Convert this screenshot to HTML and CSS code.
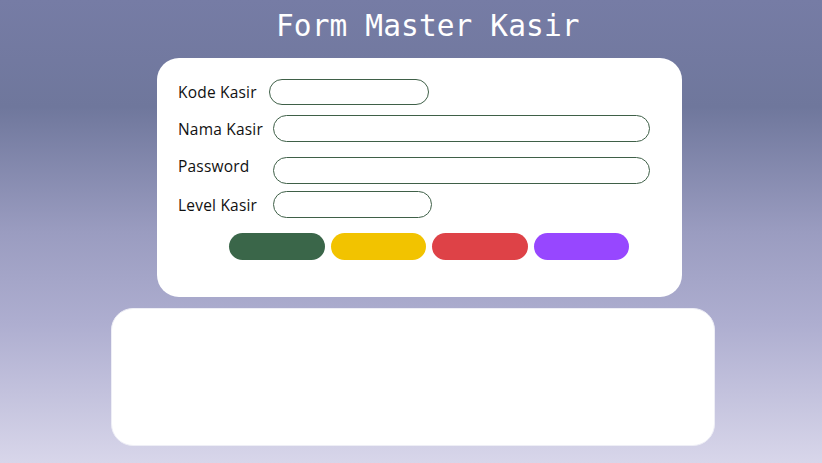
FILE: index.html
```html
<!DOCTYPE html>
<html lang="id">
<head>
<meta charset="utf-8">
<title>Form Master Kasir</title>
<link rel="stylesheet" href="styles.css">
</head>
<body>
<div class="page">
  <h1 class="title">Form Master Kasir</h1>
  <div class="card form-card">
    <div class="row row-kode">
      <label class="label">Kode Kasir</label>
      <div class="input input-short"></div>
    </div>
    <div class="row row-nama">
      <label class="label">Nama Kasir</label>
      <div class="input input-long"></div>
    </div>
    <div class="row row-pass">
      <label class="label">Password</label>
      <div class="input input-long"></div>
    </div>
    <div class="row row-level">
      <label class="label">Level Kasir</label>
      <div class="input input-level"></div>
    </div>
    <div class="buttons">
      <div class="btn btn-green"></div>
      <div class="btn btn-yellow"></div>
      <div class="btn btn-red"></div>
      <div class="btn btn-purple"></div>
    </div>
  </div>
  <div class="card table-card"></div>
</div>
</body>
</html>
```
FILE: styles.css
```css
html, body {
  margin: 0;
  padding: 0;
  height: 100%;
}
body {
  background: linear-gradient(to bottom, #767ca5 0%, #6f779c 23%, #9a9cc0 50%, #aeaed0 70%, #d8d6ea 100%);
  font-family: "Open Sans", "Noto Sans", sans-serif;
  overflow: hidden;
}
.page {
  display: flex;
  flex-direction: column;
  align-items: flex-start;
}
.title {
  margin: 8px 0 0 276px;
  height: 50px;
  font-family: "DejaVu Sans Mono", monospace;
  font-weight: normal;
  font-size: 29.5px;
  line-height: 36px;
  color: #ffffff;
  letter-spacing: 0.1px;
}
.card {
  background: #ffffff;
  border-radius: 22px;
  box-sizing: border-box;
}
.form-card {
  margin-left: 157px;
  width: 525px;
  height: 239px;
  padding: 21px 0 0 21px;
}
.row {
  display: flex;
  align-items: center;
  height: 27px;
}
.row-kode {
  height: 26px;
  margin-bottom: 10px;
}
.row-nama {
  margin-bottom: 15px;
}
.row-pass {
  margin-bottom: 7px;
}
.row-pass .label {
  margin-top: -10px;
}
.row-level {
  margin-bottom: 15px;
}
.label {
  width: 95px;
  font-size: 15.5px;
  letter-spacing: 0.2px;
  color: #111111;
  white-space: nowrap;
}
.row-kode .label {
  width: 91px;
}
.input {
  border: 1px solid #3f6048;
  border-radius: 14px;
  box-sizing: border-box;
  height: 27px;
}
.row-kode .input {
  height: 26px;
}
.input-short { width: 160px; }
.input-long { width: 377px; }
.input-level { width: 159px; }
.buttons {
  display: flex;
  gap: 6px;
  margin-left: 51px;
}
.btn {
  width: 95.5px;
  height: 27px;
  border-radius: 14px;
}
.btn-green { background: #3a6649; }
.btn-yellow { background: #f2c300; }
.btn-red { background: #de4247; }
.btn-purple { background: #9747ff; }
.table-card {
  margin: 11px 0 0 111px;
  width: 604px;
  height: 138px;
  border: 1px solid #eeeef6;
}
```
